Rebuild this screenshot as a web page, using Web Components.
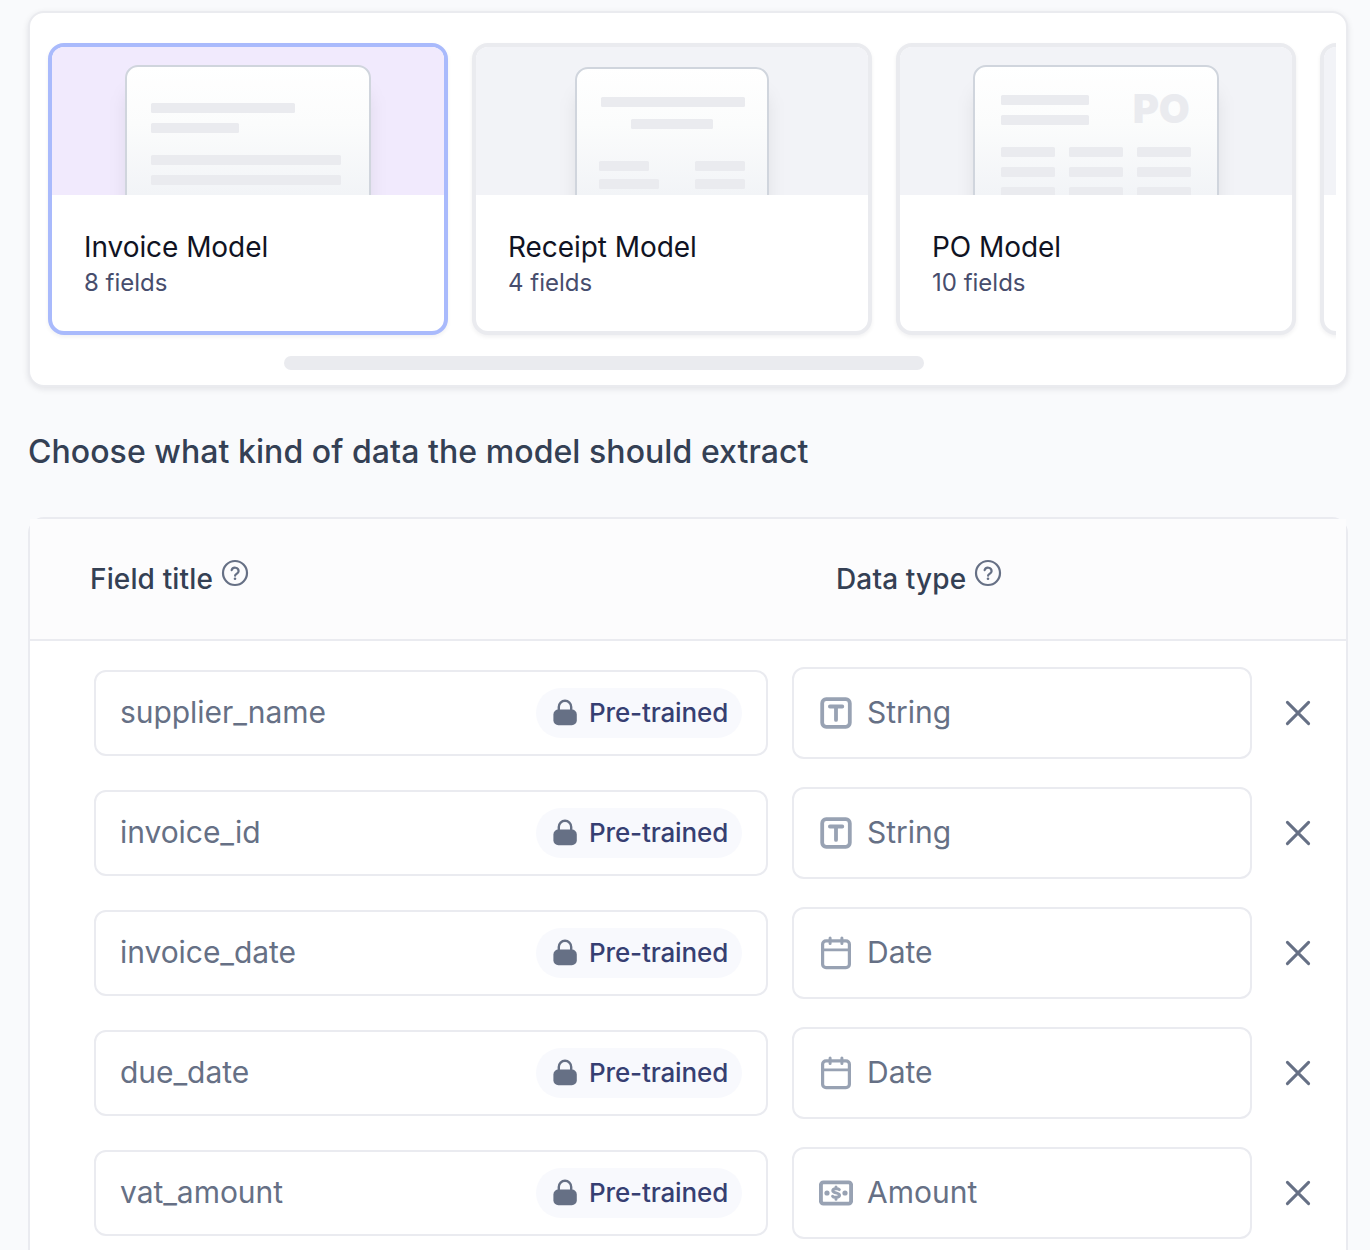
<!DOCTYPE html>
<html lang="en">
<head>
<meta charset="utf-8">
<title>Model fields</title>
<style>
html,body{margin:0;height:1250px;overflow:hidden;background:#f9fafc;font-family:Inter,"Liberation Sans",sans-serif}
</style>
</head>
<body>
<extract-page></extract-page>
<script>
const define = (name, html, setup) => {
  const tpl = document.createElement('template');
  tpl.innerHTML = html;
  customElements.define(name, class extends HTMLElement {
    constructor() {
      super();
      this.attachShadow({ mode: 'open' }).append(tpl.content.cloneNode(true));
    }
    connectedCallback() { if (setup) setup(this, this.shadowRoot); }
  });
};

/* Document previews; coordinates are local to the 392x148 art area. */
const bars = list => list.map(([x, y, w]) => `<rect x="${x}" y="${y}" width="${w}" height="10" rx="1.5" fill="#eaebef"/>`).join('');
const ART = {
  invoice: { x: 73, y: 18, w: 246, body: bars([[99,56,144],[99,76,88],[99,108,190],[99,128,190]]) },
  receipt: { x: 99, y: 20, w: 194, body: bars([[125,50,144],[155,72,82],[123,114,50],[219,114,50],[123,132,60],[219,132,50]]) },
  po: { x: 73, y: 18, w: 246, body: bars([[101,48,88],[101,68,88],[101,100,54],[169,100,54],[237,100,54],[101,120,54],[169,120,54],[237,120,54],[101,140,54],[169,140,54],[237,140,54]])
      + '<text x="232.8" y="76" font-family="Inter" font-weight="900" font-size="40" textLength="57" fill="#eaebef">PO</text>' }
};
define('doc-preview', `<style>:host{display:block;height:148px}svg{display:block}</style><div id="art"></div>`, (el, root) => {
  const a = ART[el.getAttribute('kind')];
  root.getElementById('art').innerHTML = `<svg width="392" height="148" viewBox="0 0 392 148">
    <defs><linearGradient id="g" x1="0" y1="${a ? a.y : 0}" x2="0" y2="148" gradientUnits="userSpaceOnUse"><stop offset="0" stop-color="#fff"/><stop offset=".45" stop-color="#fbfcfc"/><stop offset="1" stop-color="#f2f4f7"/></linearGradient>
    <filter id="s" x="-30%" y="-30%" width="160%" height="160%"><feGaussianBlur stdDeviation="9"/></filter></defs>
    ${a ? `<rect x="${a.x + 2}" y="${a.y + 26}" width="${a.w - 4}" height="200" rx="12" fill="#101840" fill-opacity=".09" filter="url(#s)"/>
    <rect x="${a.x + 1}" y="${a.y + 1}" width="${a.w - 2}" height="220" rx="12" fill="url(#g)" stroke="#d0d5dd" stroke-width="2"/>${a.body}` : ''}</svg>`;
});

define('model-card', `<style>
:host{display:block;box-sizing:border-box;flex:none;width:400px;height:292px;border:4px solid #eaebef;border-radius:16px;background:#fff;box-shadow:0 2px 4px rgba(16,24,40,.06)}
:host([selected]){border-color:#a9bafc}
.art{background:#f2f3f7;border-radius:12px 12px 0 0;overflow:hidden}
:host([selected]) .art{background:#f1eafd}
.info{padding:32px 32px 0}
.t{font-size:28px;line-height:40px;color:#101323;white-space:nowrap;letter-spacing:-.06px}
.c{font-size:24px;line-height:32px;color:#474d6d;white-space:nowrap}
</style><div class="art"></div><div class="info"><div class="t"><slot></slot></div><div class="c"><slot name="count"></slot></div></div>`,
(el, root) => {
  const n = document.createElement('doc-preview');
  n.setAttribute('kind', el.getAttribute('kind') || '');
  root.querySelector('.art').replaceChildren(n);
});

define('model-carousel', `<style>
:host{display:flex;flex-direction:column;box-sizing:border-box;height:376px;border:2px solid #eaebef;border-radius:16px;background:#fff;box-shadow:0 2px 6px rgba(16,24,40,.1);padding:22px 10px 0 10px}
.view{display:flex;gap:24px;overflow:hidden;padding:8px 8px 21px}
.bar{width:640px;height:14px;border-radius:7px;background:#eaebef;margin-left:244px}
</style><div class="view"><slot></slot></div><div class="bar"></div>`);

const ICONS = {
  help: [28, `<g fill="none" stroke="#667085" stroke-width="2.2" stroke-linecap="round" stroke-linejoin="round"><circle cx="14" cy="14" r="12"/><path d="M10.6 11.1a3.6 3.6 0 0 1 7 1.2c0 2.3-3.5 2.8-3.5 4.4"/></g><circle cx="14" cy="19.7" r="1.3" fill="#667085"/>`],
  lock: [28, `<path d="M7.8 13V8a6.2 6.2 0 0 1 12.4 0V13" fill="none" stroke="#667085" stroke-width="2.4"/><rect x="2.4" y="10.6" width="23.4" height="15.6" rx="5" fill="#667085"/>`],
  string: [34, `<g fill="none" stroke="#98a2b3" stroke-width="3.8" stroke-linecap="round" stroke-linejoin="round"><rect x="3.2" y="3.2" width="27.6" height="27.6" rx="4"/><path d="M10.9 10.5h12.4M17 10.7v13.2"/></g>`],
  date: [34, `<g fill="none" stroke="#98a2b3" stroke-width="3.2" stroke-linecap="round" stroke-linejoin="round"><rect x="3.6" y="4.8" width="26.8" height="26.8" rx="3.4"/><path d="M3.4 13.9h27.2" stroke-width="2.6"/><path d="M11.1 2.1v5.4M22.9 2.1v5.4" stroke-width="3"/></g>`],
  amount: [34, `<g fill="none" stroke="#98a2b3" stroke-linecap="round" stroke-linejoin="round"><rect x="1.9" y="6.4" width="30.2" height="21.2" rx="2.5" stroke-width="3.9"/><path d="M20.3 13.6C19.5 12.6 13.8 12 13.8 14.8 13.8 17.4 20.5 16.4 20.5 19.3 20.5 22 14.4 21.7 13.6 20.2M17 10.9v1.2M17 21.8v1.4" stroke-width="3"/></g><circle cx="8" cy="17" r="2.6" fill="#98a2b3"/><circle cx="26" cy="17" r="2.6" fill="#98a2b3"/>`],
  close: [34, `<path d="M6.4 6.4 27.6 27.6M27.6 6.4 6.4 27.6" stroke="#667085" stroke-width="3" stroke-linecap="round"/>`]
};
define('ui-icon', `<style>:host{display:block;flex:none}svg{display:block}</style><span id="i"></span>`, (el, root) => {
  const [s, body] = ICONS[el.getAttribute('name')];
  root.getElementById('i').innerHTML = `<svg width="${s}" height="${s}" viewBox="0 0 ${s} ${s}">${body}</svg>`;
});

define('column-title', `<style>
:host{display:flex;align-items:center;gap:8px;font-size:28px;line-height:40px;font-weight:500;color:#344054;white-space:nowrap;letter-spacing:.14px}
ui-icon{margin-bottom:12px}
</style><span><slot></slot></span><ui-icon name="help"></ui-icon>`);

define('trained-badge', `<style>
:host{display:flex;align-items:center;gap:10px;box-sizing:border-box;width:206px;height:50px;border-radius:25px;background:#f8f9fd;padding-left:15px;font-size:26px;font-weight:500;color:#363f72;white-space:nowrap;letter-spacing:-.14px}
</style><ui-icon name="lock"></ui-icon><span><slot></slot></span>`);

define('field-row', `<style>
:host{display:flex;align-items:center;height:92px;color:#667085;font-size:30px;line-height:40px;white-space:nowrap}
.name,.type{display:flex;align-items:center;box-sizing:border-box;border:2px solid #eaebf0;border-radius:12px;background:#fff}
.name{width:674px;height:86px;justify-content:space-between;padding:0 24px}
.name>span,.type>span{padding-bottom:2px}
.name>span{letter-spacing:-.05px}
.type{width:460px;height:92px;margin-left:24px;padding-left:25px;gap:14px}
.x{margin-left:29px}
</style><div class="name"><span><slot></slot></span><trained-badge>Pre-trained</trained-badge></div>
<div class="type"><span><slot name="type"></slot></span></div><ui-icon class="x" name="close"></ui-icon>`,
(el, root) => {
  const n = document.createElement('ui-icon');
  n.setAttribute('name', el.getAttribute('icon'));
  root.querySelector('.type').prepend(n);
});

define('field-table', `<style>
:host{display:block;box-sizing:border-box;height:800px;border:2px solid #eaebf0;border-radius:16px;background:#fff}
header{display:flex;height:120px;align-items:center;background:#fcfcfd;border-bottom:2px solid #eaebf0;padding-left:60px}
header column-title:first-child{width:746px}
.rows{display:flex;flex-direction:column;gap:28px;padding:26px 0 0 64px}
</style><header><column-title>Field title</column-title><column-title>Data type</column-title></header><div class="rows"><slot></slot></div>`);

define('extract-page', `<style>
:host{display:block;box-sizing:border-box;width:1370px;height:1250px;overflow:hidden;padding:11px 22px 0 28px}
h2{margin:41px 0 0;height:89px;font-size:32px;line-height:48px;font-weight:500;color:#344054;white-space:nowrap;letter-spacing:.06px}
</style>
<model-carousel>
<model-card kind="invoice" selected>Invoice Model<span slot="count">8 fields</span></model-card>
<model-card kind="receipt">Receipt Model<span slot="count">4 fields</span></model-card>
<model-card kind="po">PO Model<span slot="count">10 fields</span></model-card>
<model-card></model-card>
</model-carousel>
<h2>Choose what kind of data the model should extract</h2>
<field-table>
<field-row icon="string">supplier_name<span slot="type">String</span></field-row>
<field-row icon="string">invoice_id<span slot="type">String</span></field-row>
<field-row icon="date">invoice_date<span slot="type">Date</span></field-row>
<field-row icon="date">due_date<span slot="type">Date</span></field-row>
<field-row icon="amount">vat_amount<span slot="type">Amount</span></field-row>
</field-table>`);
</script>
</body>
</html>
